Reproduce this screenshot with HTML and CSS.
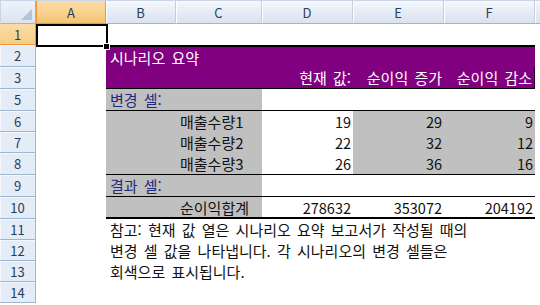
FILE: index.html
```html
<!DOCTYPE html>
<html lang="ko">
<head>
  <meta charset="UTF-8" />
  <title>시나리오 요약</title>
  <link rel="stylesheet" href="styles.css">
</head>
<body>

  <div class="sheet">

    <!-- column headers -->
    <div class="row head">
      <div class="corner"><span class="tri"></span></div>
      <div class="ch w-a sel">A</div>
      <div class="ch w-b">B</div>
      <div class="ch w-c">C</div>
      <div class="ch w-d">D</div>
      <div class="ch w-e">E</div>
      <div class="ch w-f">F</div>
      <div class="ch rest"></div>
    </div>

    <div class="row h21">
      <div class="rh sel">1</div>
      <div class="cell w-a active"><span class="handle"></span></div>
    </div>

    <!-- title block -->
    <div class="row h22">
      <div class="rh">2</div>
      <div class="cell w-a"></div>
      <div class="cell w-bf purple thick-top">시나리오 요약</div>
    </div>
    <div class="row h22">
      <div class="rh">3</div>
      <div class="cell w-a"></div>
      <div class="cell w-bc purple line-bottom"></div>
      <div class="cell w-d purple line-bottom num">현재 값:</div>
      <div class="cell w-e purple line-bottom num">순이익 증가</div>
      <div class="cell w-f purple line-bottom num edge">순이익 감소</div>
    </div>

    <!-- changing cells -->
    <div class="row h22">
      <div class="rh">5</div>
      <div class="cell w-a"></div>
      <div class="cell w-bc grey line-bottom label">변경 셀:</div>
      <div class="cell w-d line-bottom"></div>
      <div class="cell w-e line-bottom"></div>
      <div class="cell w-f line-bottom"></div>
    </div>
    <div class="row h21">
      <div class="rh">6</div>
      <div class="cell w-a"></div>
      <div class="cell w-bc grey name">매출수량1</div>
      <div class="cell w-d num val">19</div>
      <div class="cell w-e grey num val">29</div>
      <div class="cell w-f grey num val">9</div>
    </div>
    <div class="row h21">
      <div class="rh">7</div>
      <div class="cell w-a"></div>
      <div class="cell w-bc grey name">매출수량2</div>
      <div class="cell w-d num val">22</div>
      <div class="cell w-e grey num val">32</div>
      <div class="cell w-f grey num val">12</div>
    </div>
    <div class="row h22">
      <div class="rh">8</div>
      <div class="cell w-a"></div>
      <div class="cell w-bc grey name line-bottom">매출수량3</div>
      <div class="cell w-d num val line-bottom">26</div>
      <div class="cell w-e grey num val line-bottom">36</div>
      <div class="cell w-f grey num val line-bottom">16</div>
    </div>

    <!-- result cells -->
    <div class="row h22">
      <div class="rh">9</div>
      <div class="cell w-a"></div>
      <div class="cell w-bc grey line-bottom label">결과 셀:</div>
      <div class="cell w-d line-bottom"></div>
      <div class="cell w-e line-bottom"></div>
      <div class="cell w-f line-bottom"></div>
    </div>
    <div class="row h22">
      <div class="rh">10</div>
      <div class="cell w-a"></div>
      <div class="cell w-bc grey name thick-bottom">순이익합계</div>
      <div class="cell w-d num val thick-bottom">278632</div>
      <div class="cell w-e num val thick-bottom">353072</div>
      <div class="cell w-f num val thick-bottom">204192</div>
    </div>

    <!-- note -->
    <div class="row h21">
      <div class="rh">11</div>
      <div class="cell w-a"></div>
      <div class="cell note">참고: 현재 값 열은 시나리오 요약 보고서가 작성될 때의</div>
    </div>
    <div class="row h21">
      <div class="rh">12</div>
      <div class="cell w-a"></div>
      <div class="cell note">변경 셀 값을 나타냅니다. 각 시나리오의 변경 셀들은</div>
    </div>
    <div class="row h21">
      <div class="rh">13</div>
      <div class="cell w-a"></div>
      <div class="cell note">회색으로 표시됩니다.</div>
    </div>
    <div class="row h21">
      <div class="rh">14</div>
      <div class="cell w-a"></div>
    </div>

  </div>

</body>
</html>
```

FILE: styles.css
```css
body {
  margin: 0;
  background: #fff;
}

.sheet {
  width: 540px;
  height: 305px;
  overflow: hidden;
  font-family: "Noto Sans CJK KR", "Noto Sans", sans-serif;
  font-size: 15px;
  word-spacing: 2px;
  color: #111;
}

.row {
  display: flex;
}

.h21 {
  height: 21px;
}

.h22 {
  height: 22px;
}

/* headers */
.head {
  height: 24px;
  border-top: 1px solid #c9d5e4;
  box-sizing: border-box;
}

.corner {
  width: 36px;
  flex: none;
  box-sizing: border-box;
  display: flex;
  align-items: flex-end;
  justify-content: flex-end;
  padding: 0 3px 3px 0;
  background: linear-gradient(#eef3f9, #dbe4f0);
  border-left: 1px solid #c9d5e4;
  border-right: 1px solid #9eb6ce;
  border-bottom: 1px solid #9eb6ce;
}

.tri {
  width: 0;
  height: 0;
  border-left: 11px solid transparent;
  border-bottom: 11px solid #b4c5db;
}

.ch {
  flex: none;
  box-sizing: border-box;
  display: flex;
  align-items: center;
  justify-content: center;
  font-size: 13px;
  color: #2b3e57;
  background: linear-gradient(#f6f8fc, #e4ebf5 55%, #d9e2ee);
  border-right: 1px solid #c3cfdf;
  border-bottom: 1px solid #9eb6ce;
  box-shadow: inset 1px 0 0 #fff;
}

.ch.sel {
  background: linear-gradient(#fbdca6, #f8d08a 60%, #f4c370);
  border-left: 1px solid #f29536;
  border-right: 1px solid #f29536;
  border-bottom-color: #f29536;
  box-shadow: none;
}

.ch.rest {
  flex: 1;
  border-right: none;
}

.rh {
  width: 36px;
  flex: none;
  box-sizing: border-box;
  display: flex;
  align-items: center;
  justify-content: center;
  font-size: 13px;
  color: #2b3e57;
  background: #e4ecf7;
  border-right: 1px solid #9eb6ce;
  border-bottom: 1px solid #9eb6ce;
  box-shadow: inset 1px 1px 0 #f4f7fb;
}

.rh.sel {
  background: linear-gradient(#fbdca6, #f7cd85);
  border-right-color: #f29536;
  border-bottom-color: #f29536;
  box-shadow: none;
}

/* cells */
.w-a { width: 70px; }
.w-b { width: 70px; }
.w-c { width: 86px; }
.w-bc { width: 156px; }
.w-d { width: 91px; }
.w-e { width: 91px; }
.w-f { width: 91px; }
.w-bf { width: 429px; }

.cell {
  flex: none;
  box-sizing: border-box;
  display: flex;
  align-items: center;
  padding: 0 2px 0 4px;
  white-space: nowrap;
}

.num {
  justify-content: flex-end;
}

.val {
  font-size: 14.5px;
}

.name {
  padding-left: 74px;
}

.label {
  color: #1d2b7a;
}

.note {
  flex: 1;
}

.purple {
  background: #800080;
  color: #fff;
}

.grey {
  background: #c0c0c0;
}

.thick-top {
  border-top: 2px solid #000;
}

.line-bottom {
  border-bottom: 1px solid #000;
}

.thick-bottom {
  border-bottom: 2px solid #000;
}

.edge {
  border-right: 1px solid #2a002a;
}

/* active cell A1 */
.active {
  position: relative;
}

.active::after {
  content: "";
  position: absolute;
  left: 0;
  top: 0;
  width: 72px;
  height: 23px;
  box-sizing: border-box;
  border: 2px solid #000;
}

.handle {
  position: absolute;
  left: 67px;
  top: 19px;
  width: 5px;
  height: 5px;
  background: #000;
  border: 1px solid #fff;
  z-index: 1;
}
```
